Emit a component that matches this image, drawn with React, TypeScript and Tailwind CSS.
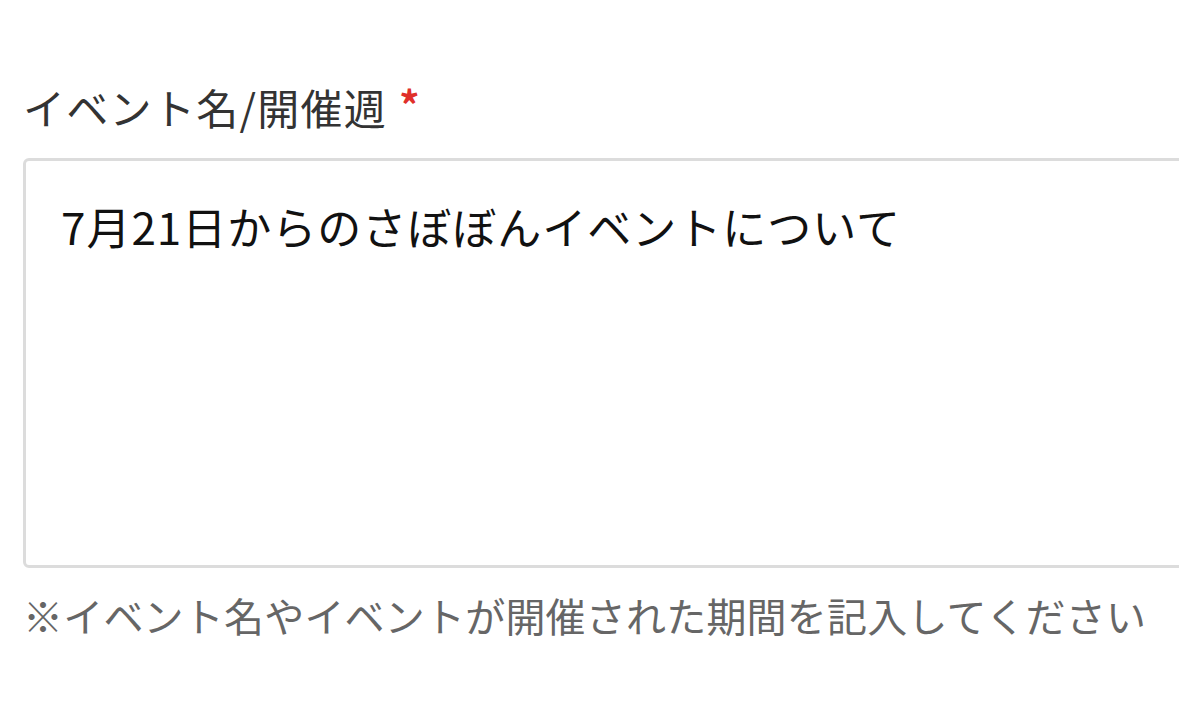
import React from "react";

const jp = '"Noto Sans CJK JP", "Noto Sans", sans-serif';

export default function App() {
  return (
    <div
      className="w-[1179px] h-[728px] overflow-hidden bg-white"
      style={{ fontFamily: jp }}
    >
      <div className="pt-[80px] pl-[23px]">
        <label className="flex items-center text-[42px] leading-[54px] tracking-[1.3px] text-[#333333]">
          イベント名/開催週
          <span className="ml-[12px] -mt-[6px] text-[#e0302a] text-[40px] font-bold">*</span>
        </label>
        <div className="mt-[24px] w-[1240px] h-[410px] rounded-[6px] border-[3px] border-[#dcdcdc] pl-[35px] pt-[36px]">
          <p className="text-[44px] leading-[58px] tracking-[1px] text-[#111111]">
            7月21日からのさぼぼんイベントについて
          </p>
        </div>
        <p className="mt-[20px] text-[40px] leading-[54px] tracking-[0.2px] text-[#666666]">
          ※イベント名やイベントが開催された期間を記入してください
        </p>
      </div>
    </div>
  );
}
